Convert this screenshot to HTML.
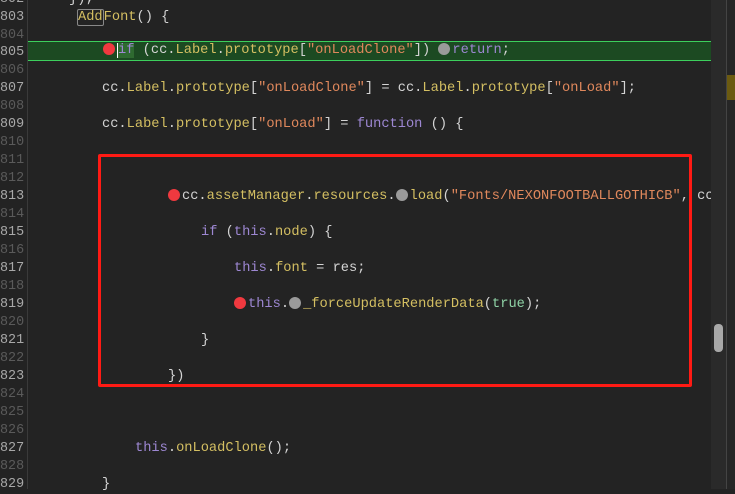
<!DOCTYPE html>
<html><head><meta charset="utf-8"><style>
html,body{margin:0;padding:0;}
body{width:735px;height:489px;background:#232323;overflow:hidden;position:relative;font-family:"Liberation Mono",monospace;font-size:13.7px;}
#w{position:absolute;left:0;top:2px;width:735px;height:489px;}
.ln{position:absolute;left:0;width:24px;text-align:right;height:18px;line-height:18px;color:#a8a8a8;font-size:13.4px;}
.ln.d{color:#5a5a5a;}
.c{position:absolute;height:18px;line-height:18px;color:#d4d4d4;white-space:pre;}
.y{color:#d4bf62}.s{color:#e0885c}.k{color:#9d87d2}.g{color:#8fd3a6}
.rd{display:inline-block;width:12px;height:12px;border-radius:50%;background:#f0393f;vertical-align:-2px;margin-right:2px}
.gd{display:inline-block;width:12px;height:12px;border-radius:50%;background:#9a9a9a;vertical-align:-2px;margin-right:2px}
</style></head><body>
<div style="position:absolute;left:27px;top:0;width:1px;height:489px;background:#3a3a3a"></div>
<div style="position:absolute;left:28px;top:41px;width:683px;height:18px;background:#1c4a22;border-top:1px solid #3ccf5c;border-bottom:1px solid #3ccf5c"></div>
<div style="position:absolute;left:98px;top:154px;width:588px;height:227px;border:3px solid #ff1a14;border-radius:2px"></div>
<div id="w">
<div class="ln" style="top:-11px">802</div>
<div class="ln" style="top:7px">803</div>
<div class="ln d" style="top:25px">804</div>
<div class="ln" style="top:42px">805</div>
<div class="ln d" style="top:60px">806</div>
<div class="ln" style="top:78px">807</div>
<div class="ln d" style="top:96px">808</div>
<div class="ln" style="top:114px">809</div>
<div class="ln d" style="top:132px">810</div>
<div class="ln d" style="top:150px">811</div>
<div class="ln d" style="top:168px">812</div>
<div class="ln" style="top:186px">813</div>
<div class="ln d" style="top:204px">814</div>
<div class="ln" style="top:222px">815</div>
<div class="ln d" style="top:240px">816</div>
<div class="ln" style="top:258px">817</div>
<div class="ln d" style="top:276px">818</div>
<div class="ln" style="top:294px">819</div>
<div class="ln d" style="top:312px">820</div>
<div class="ln" style="top:330px">821</div>
<div class="ln d" style="top:348px">822</div>
<div class="ln" style="top:366px">823</div>
<div class="ln d" style="top:384px">824</div>
<div class="ln d" style="top:402px">825</div>
<div class="ln d" style="top:420px">826</div>
<div class="ln" style="top:438px">827</div>
<div class="ln d" style="top:456px">828</div>
<div class="ln" style="top:474px">829</div>

<div class="c" style="left:69px;top:-11px">});</div>
<div class="c" style="left:77px;top:7px"><span class="y" style="border:1px solid #888;border-radius:2px;">Add</span><span class="y">Font</span>() {</div>
<div class="c" style="left:103px;top:40px"><span class="rd"></span><span class="k" style="background:#2e6a30;border-left:1px solid #fff">if</span> (cc.<span class="y">Label</span>.<span class="y">prototype</span>[<span class="s">"onLoadClone"</span>]) <span class="gd"></span><span class="k">return</span>;</div>
<div class="c" style="left:102px;top:78px">cc.<span class="y">Label</span>.<span class="y">prototype</span>[<span class="s">"onLoadClone"</span>] = cc.<span class="y">Label</span>.<span class="y">prototype</span>[<span class="s">"onLoad"</span>];</div>
<div class="c" style="left:102px;top:114px">cc.<span class="y">Label</span>.<span class="y">prototype</span>[<span class="s">"onLoad"</span>] = <span class="k">function</span> () {</div>
<div class="c" style="left:168px;top:186px"><span class="rd"></span>cc.<span class="y">assetManager</span>.<span class="y">resources</span>.<span class="gd"></span><span class="y">load</span>(<span class="s">"Fonts/NEXONFOOTBALLGOTHICB"</span>, cc</div>
<div class="c" style="left:201px;top:222px"><span class="k">if</span> (<span class="k">this</span>.<span class="y">node</span>) {</div>
<div class="c" style="left:234px;top:258px"><span class="k">this</span>.<span class="y">font</span> = res;</div>
<div class="c" style="left:234px;top:294px"><span class="rd"></span><span class="k">this</span>.<span class="gd"></span><span class="y">_forceUpdateRenderData</span>(<span class="g">true</span>);</div>
<div class="c" style="left:201px;top:330px">}</div>
<div class="c" style="left:168px;top:366px">})</div>
<div class="c" style="left:135px;top:438px"><span class="k">this</span>.<span class="y">onLoadClone</span>();</div>
<div class="c" style="left:102px;top:474px">}</div>
</div>
<div style="position:absolute;left:711px;top:0;width:15px;height:489px;background:#2a2a2a"></div>
<div style="position:absolute;left:726px;top:0;width:1px;height:489px;background:#444"></div>
<div style="position:absolute;left:727px;top:0;width:8px;height:489px;background:#262626"></div>
<div style="position:absolute;left:727px;top:75px;width:8px;height:25px;background:#6b5a10"></div>
<div style="position:absolute;left:714px;top:324px;width:9px;height:28px;border-radius:4px;background:#a8a8a8"></div>
</body></html>
